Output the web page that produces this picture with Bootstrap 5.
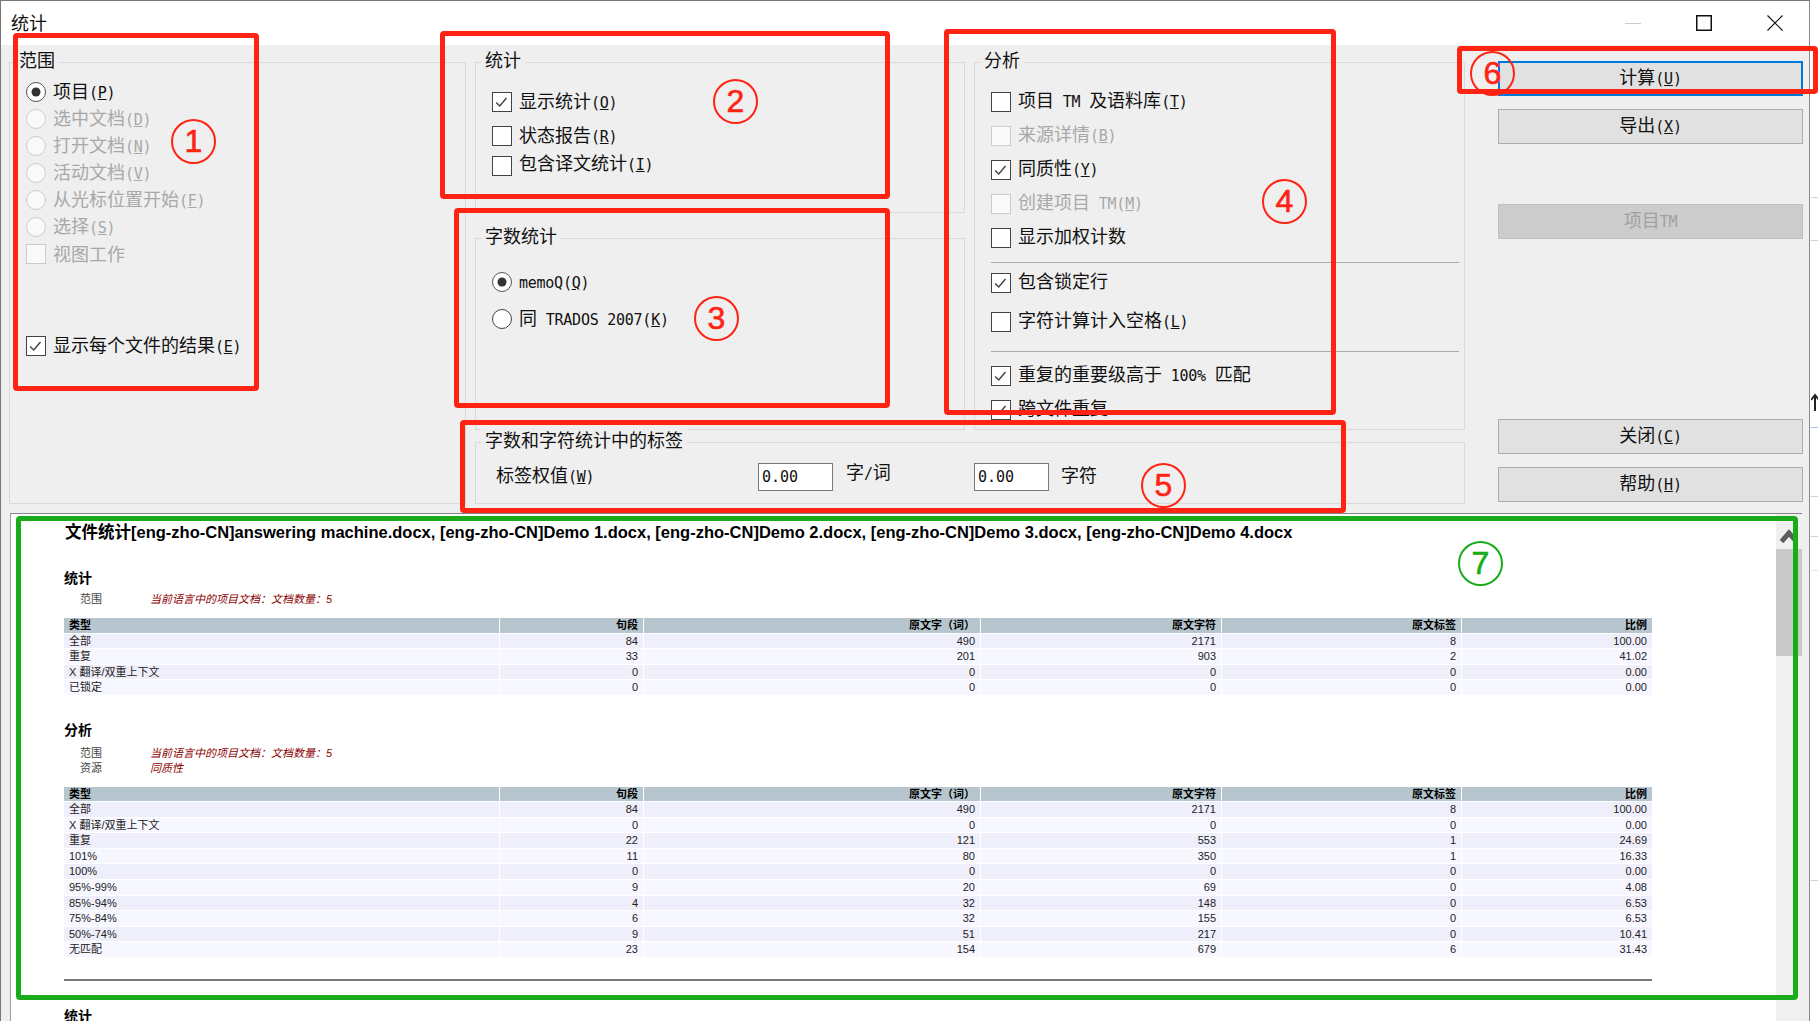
<!DOCTYPE html>
<html lang="zh-CN">
<head>
<meta charset="utf-8">
<title>统计</title>
<link href="https://cdn.jsdelivr.net/npm/bootstrap@5.3.0/dist/css/bootstrap.min.css" rel="stylesheet">
<style>
html,body{height:100%}
body{margin:0;overflow:hidden;background:#fff;color:#111;font-family:"Noto Sans CJK SC","Liberation Sans",sans-serif;font-size:18px;position:relative}
.lt{font-family:"DejaVu Sans Mono","Noto Sans CJK SC",monospace;font-size:15px;white-space:pre;letter-spacing:-.25px}
.win{width:1810px;height:1021px;border-left:1px solid #777;border-top:1px solid #777;border-right:1px solid #888;display:flex;flex-direction:column;background:#efefef}
.tbar{height:44px;background:#fff;padding:0 26px 0 10px;flex:none}
.tbar .ttl{line-height:42px}
.winctl{gap:55px;margin-top:14px}
.dlg{height:468px;flex:none;padding:17px 6px 0 8px;gap:33px}
.groups{display:grid;grid-template-columns:457px 490px 491px;grid-template-rows:368px 62px;column-gap:9px;row-gap:12px;width:1456px;height:442px}
.grp{border:1px solid #d9d9d9;background:#efefef}
.g-scope{grid-row:1 / span 2;padding-left:16px}
.g-mid{display:flex;flex-direction:column;gap:25px}
.g-stat{height:151px;padding-left:16px}
.g-count{height:192px;padding-left:16px}
.g-ana{padding-left:16px}
.g-tag{grid-column:2 / span 2;padding-left:20px}
.gt{display:block;width:fit-content;margin:-16px 0 2px -11px;padding:0 4px;line-height:24px;height:24px;background:#efefef;white-space:nowrap}
.g-scope .gt{margin-left:-11px}
.g-tag .gt{margin-left:-15px}
.opt{display:flex;align-items:center;gap:7px;margin:0;white-space:nowrap}
.opt>span{padding-bottom:3px}
.opt.off{color:#a8a8a8}
.opt .form-check-input{width:20px;height:20px;margin:0;flex:none;border:1.5px solid #444;background-color:#fff;opacity:1;box-shadow:none;--bs-form-check-bg:#fff}
.opt .form-check-input[type=checkbox]{border-radius:0}
.opt .form-check-input:disabled{border-color:#ccc;background-color:#f9f9f9}
.opt .form-check-input:checked[type=radio]{background-color:#fff;border-color:#555;background-image:url("data:image/svg+xml,%3csvg xmlns='http://www.w3.org/2000/svg' viewBox='0 0 20 20'%3e%3ccircle cx='10' cy='10' r='5' fill='%23333'/%3e%3c/svg%3e");background-size:100% 100%}
.opt .form-check-input:checked[type=checkbox]{background-color:#fff;border-color:#444;background-image:url("data:image/svg+xml,%3csvg xmlns='http://www.w3.org/2000/svg' viewBox='0 0 20 20'%3e%3cpath d='M3.5 10.500 7.500 14.500 15 5.500' fill='none' stroke='%23444' stroke-width='1.6'/%3e%3c/svg%3e");background-size:100% 100%}
.scope-list{padding-top:5px}
.scope-list .opt{height:27px}
.scope-list .opt>span{padding-bottom:1px}
.scope-list .opt.last{margin-top:65px}
.stat-list{padding-top:14px}
.stat-list .opt{height:30px}
.stat-list .opt.s2{margin-top:4px}
.stat-list .opt.s3>span{padding-bottom:6px}
.count-list{padding-top:18px;display:flex;flex-direction:column;gap:7px}
.count-list .opt{height:30px}
.ana-list{height:347px;overflow:hidden;padding-top:12px}
.ana-list .opt{height:34px}
.ana-list .opt>span{padding-bottom:5px}
.ana-list .sep{height:1px;background:#a9a9a9;margin:7px 6px 0 0;opacity:1;border:0;width:468px}
.ana-list .m3{margin-top:3px}
.ana-list .m5{margin-top:5px}
.ana-list .m7{margin-top:7px}
.ana-list .sep.s2{margin-top:12px}
.tag-row{padding-top:10px;height:38px}
.tag-lab{width:262px;flex:none;padding-bottom:5px}
.tag-inp{width:75px;height:28px;flex:none;border:1px solid #7a7a7a;border-radius:0;padding:0 3px;font-family:"DejaVu Sans Mono",monospace;font-size:15px;background:#fff;color:#111;box-shadow:none}
.u1{margin:-11px 0 0 13px;width:53px;flex:none}
.tag-inp2{margin-left:75px}
.u2{margin-left:12px;padding-bottom:6px}
.btns{width:305px;display:flex;flex-direction:column;flex:none;height:441px;margin-top:-1px}
.wbtn{height:35px;flex:none;background:#e1e1e1;border:1.5px solid #adadad;border-radius:0;color:#111;font-size:18px;padding:0 0 3px;line-height:26px;font-family:inherit}
.wbtn.fcs{border:2px solid #0078d7}
.wbtn.n2{margin-top:13px}
.wbtn.n3{margin-top:60px}
.wbtn.n4{margin-top:auto}
.wbtn.n5{margin-top:13px}
.wbtn:disabled{background:#ccc;border-color:#bfbfbf;color:#a0a0a0;opacity:1}
.rpt{flex:1 1 auto;min-height:0;margin:0 7px 0 9px;background:#fff;border-top:1px solid #888;border-left:1px solid #a0a0a0;overflow:hidden}
.rpt-body{width:1765px;padding-left:53px;overflow:hidden;font-family:"Liberation Sans","Noto Sans CJK SC",sans-serif}
.rpt-h1{font-size:16.5px;font-weight:700;line-height:20px;margin:8px 0 0 1px;color:#000;white-space:nowrap}
.rpt-h2{font-size:14px;font-weight:700;line-height:20px;margin:25px 0 0;color:#000}
.rpt-h2.sec1{margin-top:26px}
.rpt-h2.sec2{margin-top:24px}
.info{font-size:11px;line-height:15px;padding-left:16px;color:#444}
.info-k{width:70px;flex:none}
.info-v{color:#8b0000;font-style:italic}
.info-first{margin-top:4px}
.info-first.i2{margin-top:6px}
.table.rtab{width:1590px;table-layout:fixed;border-collapse:separate;border-spacing:1px;margin:0 0 0 -1px;font-size:11px;color:#222}
.table.rtab>:not(caption)>*>*{padding:0 5px;line-height:14.55px;height:14.55px;border:0;box-shadow:none;text-align:right;color:#222;background-color:#f7f7ff;white-space:nowrap}
.table.rtab>tbody>tr:nth-child(odd)>*{background-color:#efeffb}
.table.rtab>thead>tr>*{background-color:#b7c5ce;font-weight:700;color:#000}
.table.rtab>:not(caption)>*>*:first-child{text-align:left}
.c1{width:435px}.c2{width:143px}.c3{width:336px}.c4{width:240px}.c5{width:239px}.c6{width:190px}
.tab-a{margin-top:10px !important}
.tab-b{margin-top:10px !important}
.rule{width:1588px;height:2px;margin:21px 0 0;background:#777;border:0;opacity:1}
.sbar{width:26px;flex:none;background:#f0f0f0}
.sb-up{height:35px;padding-bottom:6px}
.sb-th{height:107px;background:#c9c9c9}
.edge{position:absolute;left:1811px;right:0;top:0;bottom:0;overflow:hidden}
.e-line{position:absolute;left:0;right:0;height:1px;background:#c9d3de}
.e-l1{top:197px}.e-l2{top:240px}.e-l3{top:427px;background:#9fc0e0}.e-l4{top:496px}.e-l5{top:536px}.e-l6{top:570px;background:#dfe6f7}.e-l7{top:880px}
.e-arrow{position:absolute;left:0;top:393px}
.box-r,.box-g{position:absolute;border:5px solid #ff2314;border-radius:4px;pointer-events:none}
.box-g{border-color:#1aab1a}
.b1{left:13px;top:33px;width:246px;height:358px}
.b2{left:440px;top:31px;width:450px;height:168px}
.b3{left:454px;top:208px;width:436px;height:200px}
.b4{left:944px;top:29px;width:392px;height:386px}
.b5{left:460px;top:420px;width:886px;height:93px}
.b6{left:1457px;top:46px;width:361px;height:48px}
.b7{left:16px;top:516px;width:1782px;height:484px}
.num{position:absolute;width:45px;height:45px;border:2.5px solid #ff2314;border-radius:50%;color:#ff2314;font:32px/40px "Liberation Sans",sans-serif;text-align:center;pointer-events:none;-webkit-text-stroke:.6px currentColor}
.n-1{left:171px;top:119px}.n-2{left:713px;top:79px}.n-3{left:694px;top:296px}.n-4{left:1262px;top:179px}.n-5{left:1141px;top:463px}.n-6{left:1470px;top:51px}
.n-7{left:1458px;top:541px;border-color:#1aab1a;color:#1aab1a}
</style>
</head>
<body>
<div class="win">
  <div class="tbar d-flex justify-content-between align-items-start">
    <div class="ttl">统计</div>
    <div class="winctl d-flex align-items-center">
      <svg width="16" height="14" viewBox="0 0 16 14"><path d="M0 7.500H16" stroke="#ccc" stroke-width="1"/></svg>
      <svg width="16" height="16" viewBox="0 0 16 16"><rect x=".75" y=".75" width="14.5" height="14.5" fill="none" stroke="#111" stroke-width="1.5"/></svg>
      <svg width="16" height="16" viewBox="0 0 16 16"><path d="M.5.5l15 15M15.500.5l-15 15" fill="none" stroke="#111" stroke-width="1.1"/></svg>
    </div>
  </div>
  <div class="dlg d-flex flex-none">
    <div class="groups">
      <div class="grp g-scope">
        <span class="gt">范围</span>
        <div class="scope-list">
          <label class="opt"><input class="form-check-input" type="radio" name="scope" checked><span>项目<span class="lt">(<u>P</u>)</span></span></label>
          <label class="opt off"><input class="form-check-input" type="radio" name="scope" disabled><span>选中文档<span class="lt">(<u>D</u>)</span></span></label>
          <label class="opt off"><input class="form-check-input" type="radio" name="scope" disabled><span>打开文档<span class="lt">(<u>N</u>)</span></span></label>
          <label class="opt off"><input class="form-check-input" type="radio" name="scope" disabled><span>活动文档<span class="lt">(<u>V</u>)</span></span></label>
          <label class="opt off"><input class="form-check-input" type="radio" name="scope" disabled><span>从光标位置开始<span class="lt">(<u>F</u>)</span></span></label>
          <label class="opt off"><input class="form-check-input" type="radio" name="scope" disabled><span>选择<span class="lt">(<u>S</u>)</span></span></label>
          <label class="opt off"><input class="form-check-input" type="checkbox" disabled><span>视图工作</span></label>
          <label class="opt last"><input class="form-check-input" type="checkbox" checked><span>显示每个文件的结果<span class="lt">(<u>E</u>)</span></span></label>
        </div>
      </div>
      <div class="g-mid">
        <div class="grp g-stat">
          <span class="gt">统计</span>
          <div class="stat-list">
            <label class="opt"><input class="form-check-input" type="checkbox" checked><span>显示统计<span class="lt">(<u>O</u>)</span></span></label>
            <label class="opt s2"><input class="form-check-input" type="checkbox"><span>状态报告<span class="lt">(<u>R</u>)</span></span></label>
            <label class="opt s3"><input class="form-check-input" type="checkbox"><span>包含译文统计<span class="lt">(<u>I</u>)</span></span></label>
          </div>
        </div>
        <div class="grp g-count">
          <span class="gt">字数统计</span>
          <div class="count-list">
            <label class="opt"><input class="form-check-input" type="radio" name="cnt" checked><span><span class="lt">memoQ(<u>Q</u>)</span></span></label>
            <label class="opt"><input class="form-check-input" type="radio" name="cnt"><span>同<span class="lt"> TRADOS 2007(<u>K</u>)</span></span></label>
          </div>
        </div>
      </div>
      <div class="grp g-ana">
        <span class="gt">分析</span>
        <div class="ana-list">
          <label class="opt"><input class="form-check-input" type="checkbox"><span>项目<span class="lt"> TM </span>及语料库<span class="lt">(<u>T</u>)</span></span></label>
          <label class="opt off"><input class="form-check-input" type="checkbox" disabled><span>来源详情<span class="lt">(<u>B</u>)</span></span></label>
          <label class="opt"><input class="form-check-input" type="checkbox" checked><span>同质性<span class="lt">(<u>Y</u>)</span></span></label>
          <label class="opt off"><input class="form-check-input" type="checkbox" disabled><span>创建项目<span class="lt"> TM(<u>M</u>)</span></span></label>
          <label class="opt"><input class="form-check-input" type="checkbox"><span>显示加权计数</span></label>
          <hr class="sep">
          <label class="opt m3"><input class="form-check-input" type="checkbox" checked><span>包含锁定行</span></label>
          <label class="opt m5"><input class="form-check-input" type="checkbox"><span>字符计算计入空格<span class="lt">(<u>L</u>)</span></span></label>
          <hr class="sep s2">
          <label class="opt m7"><input class="form-check-input" type="checkbox" checked><span>重复的重要级高于<span class="lt"> 100% </span>匹配</span></label>
          <label class="opt"><input class="form-check-input" type="checkbox" checked><span>跨文件重复</span></label>
        </div>
      </div>
      <div class="grp g-tag">
        <span class="gt">字数和字符统计中的标签</span>
        <div class="tag-row d-flex align-items-center">
          <span class="tag-lab">标签权值<span class="lt">(<u>W</u>)</span></span>
          <input class="form-control tag-inp" type="text" value="0.00">
          <span class="u1">字<span class="lt">/</span>词</span>
          <input class="form-control tag-inp tag-inp2" type="text" value="0.00">
          <span class="u2">字符</span>
        </div>
      </div>
    </div>
    <div class="btns">
      <button class="btn wbtn fcs" type="button">计算<span class="lt">(<u>U</u>)</span></button>
      <button class="btn wbtn n2" type="button">导出<span class="lt">(<u>X</u>)</span></button>
      <button class="btn wbtn n3" type="button" disabled>项目<span class="lt">TM</span></button>
      <button class="btn wbtn n4" type="button">关闭<span class="lt">(<u>C</u>)</span></button>
      <button class="btn wbtn n5" type="button">帮助<span class="lt">(<u>H</u>)</span></button>
    </div>
  </div>
  <div class="rpt d-flex">
    <div class="rpt-body">
      <div class="rpt-h1">文件统计[eng-zho-CN]answering machine.docx, [eng-zho-CN]Demo 1.docx, [eng-zho-CN]Demo 2.docx, [eng-zho-CN]Demo 3.docx, [eng-zho-CN]Demo 4.docx</div>
      <div class="rpt-h2 sec1">统计</div>
      <div class="info info-first d-flex"><span class="info-k">范围</span><span class="info-v">当前语言中的项目文档：文档数量：5</span></div>
      <table class="table rtab tab-a">
        <colgroup><col class="c1"><col class="c2"><col class="c3"><col class="c4"><col class="c5"><col class="c6"></colgroup>
        <thead><tr><th>类型</th><th>句段</th><th>原文字（词）</th><th>原文字符</th><th>原文标签</th><th>比例</th></tr></thead>
        <tbody>
          <tr><td>全部</td><td>84</td><td>490</td><td>2171</td><td>8</td><td>100.00</td></tr>
          <tr><td>重复</td><td>33</td><td>201</td><td>903</td><td>2</td><td>41.02</td></tr>
          <tr><td>X 翻译/双重上下文</td><td>0</td><td>0</td><td>0</td><td>0</td><td>0.00</td></tr>
          <tr><td>已锁定</td><td>0</td><td>0</td><td>0</td><td>0</td><td>0.00</td></tr>
        </tbody>
      </table>
      <div class="rpt-h2 sec2">分析</div>
      <div class="info info-first i2 d-flex"><span class="info-k">范围</span><span class="info-v">当前语言中的项目文档：文档数量：5</span></div>
      <div class="info d-flex"><span class="info-k">资源</span><span class="info-v">同质性</span></div>
      <table class="table rtab tab-b">
        <colgroup><col class="c1"><col class="c2"><col class="c3"><col class="c4"><col class="c5"><col class="c6"></colgroup>
        <thead><tr><th>类型</th><th>句段</th><th>原文字（词）</th><th>原文字符</th><th>原文标签</th><th>比例</th></tr></thead>
        <tbody>
          <tr><td>全部</td><td>84</td><td>490</td><td>2171</td><td>8</td><td>100.00</td></tr>
          <tr><td>X 翻译/双重上下文</td><td>0</td><td>0</td><td>0</td><td>0</td><td>0.00</td></tr>
          <tr><td>重复</td><td>22</td><td>121</td><td>553</td><td>1</td><td>24.69</td></tr>
          <tr><td>101%</td><td>11</td><td>80</td><td>350</td><td>1</td><td>16.33</td></tr>
          <tr><td>100%</td><td>0</td><td>0</td><td>0</td><td>0</td><td>0.00</td></tr>
          <tr><td>95%-99%</td><td>9</td><td>20</td><td>69</td><td>0</td><td>4.08</td></tr>
          <tr><td>85%-94%</td><td>4</td><td>32</td><td>148</td><td>0</td><td>6.53</td></tr>
          <tr><td>75%-84%</td><td>6</td><td>32</td><td>155</td><td>0</td><td>6.53</td></tr>
          <tr><td>50%-74%</td><td>9</td><td>51</td><td>217</td><td>0</td><td>10.41</td></tr>
          <tr><td>无匹配</td><td>23</td><td>154</td><td>679</td><td>6</td><td>31.43</td></tr>
        </tbody>
      </table>
      <hr class="rule">
      <div class="rpt-h2">统计</div>
    </div>
    <div class="sbar">
      <div class="sb-up d-flex justify-content-center align-items-end">
        <svg width="18" height="14" viewBox="0 0 18 14"><path d="M1.500 12.500 9 4l7.500 8.500" fill="none" stroke="#5c5c5c" stroke-width="5"/></svg>
      </div>
      <div class="sb-th"></div>
    </div>
  </div>
</div>
<div class="edge">
  <div class="e-line e-l1"></div><div class="e-line e-l2"></div><div class="e-line e-l3"></div><div class="e-line e-l4"></div><div class="e-line e-l5"></div><div class="e-line e-l6"></div><div class="e-line e-l7"></div>
  <svg class="e-arrow" width="7" height="18" viewBox="0 0 7 18"><path d="M4 18V3M0 7l4-5 4 5" fill="none" stroke="#222" stroke-width="2"/></svg>
</div>
<div class="box-r b1"></div><div class="box-r b2"></div><div class="box-r b3"></div><div class="box-r b4"></div><div class="box-r b5"></div><div class="box-r b6"></div><div class="box-g b7"></div>
<div class="num n-1">1</div><div class="num n-2">2</div><div class="num n-3">3</div><div class="num n-4">4</div><div class="num n-5">5</div><div class="num n-6">6</div><div class="num n-7">7</div>
<script src="https://cdn.jsdelivr.net/npm/bootstrap@5.3.0/dist/js/bootstrap.bundle.min.js"></script>
</body>
</html>
